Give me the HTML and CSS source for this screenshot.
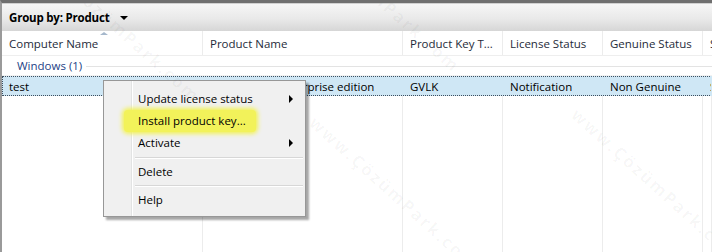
FILE: index.html
```html
<!DOCTYPE html>
<html lang="en">
  <head>
    <meta charset="UTF-8" />
    <title>Volume Activation - Products</title>
    <link rel="stylesheet" href="styles.css">
  </head>
  <body>
    <div class="va-frame">
      <div class="va-toolbar">
        <span class="va-groupby">Group by: Product</span>
        <span class="va-caret"></span>
      </div>
      <div class="va-grid">
        <div class="va-row va-head">
          <div class="va-cell">Computer Name<span class="va-sort"></span></div>
          <div class="va-cell">Product Name</div>
          <div class="va-cell">Product Key T...</div>
          <div class="va-cell">License Status</div>
          <div class="va-cell">Genuine Status</div>
          <div class="va-cell">S</div>
        </div>
        <div class="va-group">
          <span class="va-group-name">Windows (1)</span>
          <span class="va-group-line"></span>
        </div>
        <div class="va-row va-selected">
          <div class="va-cell">test</div>
          <div class="va-cell">Windows(R), Enterprise edition</div>
          <div class="va-cell">GVLK</div>
          <div class="va-cell">Notification</div>
          <div class="va-cell">Non Genuine</div>
          <div class="va-cell">S</div>
        </div>
        <div class="va-row va-empty">
          <div class="va-cell"></div>
          <div class="va-cell"></div>
          <div class="va-cell"></div>
          <div class="va-cell"></div>
          <div class="va-cell"></div>
          <div class="va-cell"></div>
        </div>
      </div>

      <ul class="va-menu">
        <li class="va-item">Update license status<span class="va-arrow"></span></li>
        <li class="va-item va-marked"><span class="va-mark">Install product key...</span></li>
        <li class="va-item">Activate<span class="va-arrow"></span></li>
        <li class="va-sep"></li>
        <li class="va-item">Delete</li>
        <li class="va-sep"></li>
        <li class="va-item">Help</li>
      </ul>

      <!-- site watermark -->
      <span class="va-wm wm-1">www.ÇözümPark.com</span>
      <span class="va-wm wm-2">www.ÇözümPark.com</span>
      <span class="va-wm wm-3">www.ÇözümPark.com</span>
      <span class="va-wm wm-4">www.ÇözümPark.com</span>
    </div>
  </body>
</html>
```

FILE: styles.css
```css
html,
body {
  margin: 0;
  padding: 0;
  background: #fff;
}
.va-frame {
  position: relative;
  width: 710px;
  height: 249px;
  overflow: hidden;
  border-left: 2px solid #9a9a9a;
  border-top: 3px solid #6f6f6f;
  font-family: "Open Sans", "Noto Sans", Arial, sans-serif;
  font-size: 11.5px;
  color: #000;
}
.va-toolbar {
  height: 28px;
  display: flex;
  align-items: center;
  padding-left: 7px;
  gap: 11px;
  background: linear-gradient(#f6f6f6, #e9e9e9 55%, #d6d6d6);
  border-top: 1px solid #d0d0d0;
  box-sizing: border-box;
}
.va-groupby {
  font-weight: bold;
  font-size: 11.5px;
  letter-spacing: -0.2px;
}
.va-caret {
  width: 0;
  height: 0;
  border-left: 4px solid transparent;
  border-right: 4px solid transparent;
  border-top: 4px solid #000;
  margin-top: 1px;
}
.va-grid {
  display: flex;
  flex-direction: column;
}
.va-row {
  display: grid;
  grid-template-columns: 201px 200px 100px 100px 100px 1fr;
  height: 20px;
}
.va-cell {
  position: relative;
  padding-left: 7px;
  display: flex;
  align-items: center;
  white-space: nowrap;
  overflow: hidden;
  border-right: 1px solid #ececec;
}
.va-head {
  height: 25px;
  border-bottom: 1px solid #eeeeee;
  box-sizing: border-box;
}
.va-head .va-cell {
  color: #1e2b3a;
  overflow: visible;
}
.va-sort {
  position: absolute;
  left: 98px;
  top: 1px;
  width: 0;
  height: 0;
  border-left: 4px solid transparent;
  border-right: 4px solid transparent;
  border-bottom: 3px solid #a6b8cc;
}
.va-group {
  height: 19px;
  display: flex;
  align-items: center;
  gap: 4px;
  padding-left: 15px;
  border-bottom: 1px solid #f1f1f1;
}
.va-group-name {
  color: #1e3f86;
}
.va-group-line {
  flex: 1;
  border-top: 1px solid #e3e3e3;
  margin-top: 1px;
}
.va-selected {
  background: #cfe7f5;
  outline: 1px dotted #3d4f5f;
  outline-offset: -1px;
}
.va-selected .va-cell {
  border-right-color: #cfe7f5;
}
.va-empty {
  height: 160px;
}
.va-menu {
  position: absolute;
  left: 101px;
  top: 77px;
  width: 197px;
  margin: 0;
  padding: 7px 2px 5px 2px;
  list-style: none;
  background: linear-gradient(90deg, #f0f0f0 27px, #e2e3e3 27px, #e2e3e3 28px, #fff 28px, #fff 29px, #f0f0f0 29px);
  border: 1px solid #979797;
  box-shadow: 3px 3px 2px rgba(0, 0, 0, 0.35);
}
.va-item {
  position: relative;
  height: 22px;
  line-height: 22px;
  padding-left: 32px;
  font-size: 11.5px;
}
.va-arrow {
  position: absolute;
  right: 10px;
  top: 7px;
  width: 0;
  height: 0;
  border-top: 4px solid transparent;
  border-bottom: 4px solid transparent;
  border-left: 4px solid #000;
}
.va-mark {
  display: inline-block;
  margin-left: -14px;
  padding: 0 10px 0 14px;
  background: #f2f25a;
  box-shadow: 0 0 4px 2px #f2f25a;
  border-radius: 4px;
}
.va-sep {
  height: 7px;
  margin-left: 29px;
  background: linear-gradient(transparent 3px, #d7d7d7 3px, #d7d7d7 4px, #fff 4px, #fff 5px, transparent 5px);
}
.va-sep + .va-item + .va-sep {
  height: 6px;
  background: linear-gradient(transparent 2px, #d7d7d7 2px, #d7d7d7 3px, #fff 3px, #fff 4px, transparent 4px);
}
.va-wm {
  position: absolute;
  font-size: 17px;
  font-weight: bold;
  letter-spacing: 2px;
  color: rgba(0, 0, 0, 0.035);
  transform: rotate(42deg);
  transform-origin: left top;
  white-space: nowrap;
  pointer-events: none;
}
.wm-1 {
  left: 318px;
  top: 108px;
}
.wm-2 {
  left: 580px;
  top: 100px;
}
.wm-3 {
  left: 40px;
  top: -60px;
}
.wm-4 {
  left: 300px;
  top: -90px;
}
```
